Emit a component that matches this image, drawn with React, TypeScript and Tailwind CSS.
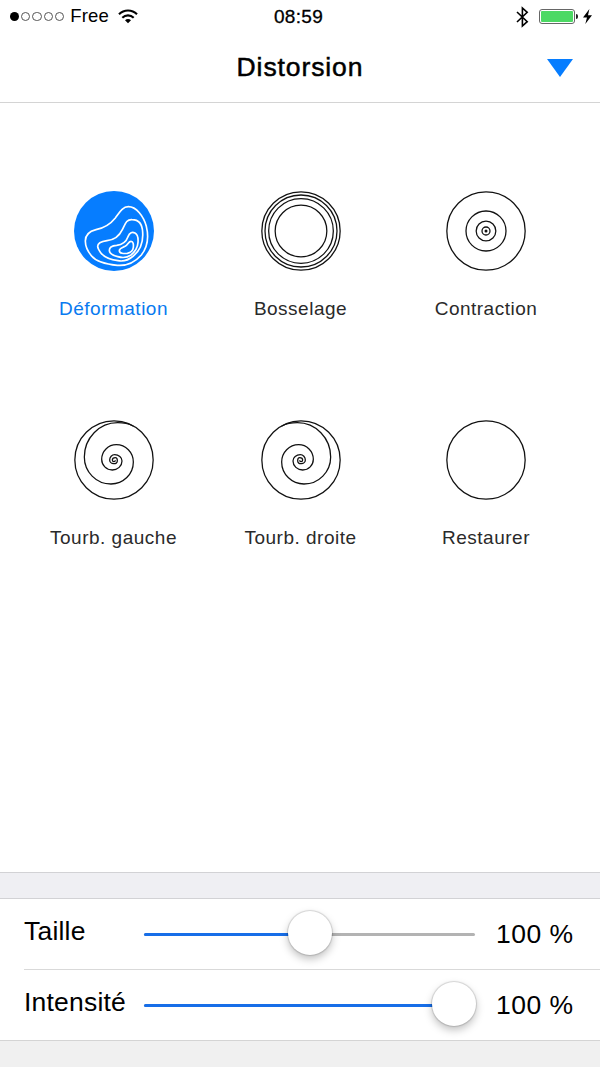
import type { ReactNode } from "react";
import clsx from "clsx";

const SPIRAL =
  "M178 18 C164 11 148 8 131 8 A100 103 0 0 0 31 111 A80 81 0 0 0 111 192 A67 66 0 0 0 178 126 A51 52 0 0 0 127 74 A44 44 0 0 0 83 118 A32 32 0 0 0 115 150 A29 27 0 0 0 144 123 A22 19 0 0 0 122 104 A15 16 0 0 0 107 120 A12 11 0 0 0 119 131 A11 9 0 0 0 130 122 A6 9 0 0 0 124 113 A9 7 0 0 0 115 120 A5 5 0 0 0 120 125 A4 4 0 0 0 124 121";

function Icon({ children }: { children?: ReactNode }) {
  return (
    <svg viewBox="0 0 240 240" className="size-20" fill="none" stroke="#111" strokeWidth="3.8">
      <circle cx="120" cy="120" r="117.5" />
      {children}
    </svg>
  );
}

function WarpIcon() {
  return (
    <svg viewBox="0 0 240 240" className="size-20" fill="none" stroke="#fff" strokeWidth="5" strokeLinejoin="round">
      <circle cx="120" cy="120" r="120" fill="#067dff" stroke="none" />
      <path d="M34 150 C34 130 46 121 66 116 C91 111 108 101 124 81 C136 65 145 47 163 47 C187 47 209 76 217 106 C225 139 220 169 202 192 C180 217 153 225 130 223 C99 220 67 212 52 194 C42 182 34 166 34 150 Z" />
      <path d="M71 166 C71 154 83 151 99 149 C120 147 136 135 145 116 C154 98 157 85 174 86 C195 86 205 99 206 124 C208 153 199 178 178 195 C164 207 148 212 132 209 C108 206 90 198 80 185 C74 177 71 172 71 166 Z" />
      <path d="M106 178 C106 168 114 164 128 163 C145 161 157 151 162 137 C167 124 175 122 183 126 C191 130 193 140 192 154 C191 170 184 181 171 192 C161 199 145 201 131 197 C115 193 106 186 106 178 Z" />
      <path d="M136 179 C136 171 145 170 153 166 C162 161 164 151 171 151 C178 151 179 161 178 169 C177 178 169 185 160 187 C150 188 136 188 136 179 Z" />
    </svg>
  );
}

const tools = [
  { label: "Déformation", active: true, icon: <WarpIcon /> },
  {
    label: "Bosselage",
    icon: (
      <Icon>
        <circle cx="120" cy="120" r="108" />
        <circle cx="120" cy="120" r="97" />
        <circle cx="120" cy="120" r="77.5" />
      </Icon>
    ),
  },
  {
    label: "Contraction",
    icon: (
      <Icon>
        <circle cx="120" cy="120" r="60" />
        <circle cx="120" cy="120" r="29.5" />
        <circle cx="120" cy="120" r="12" />
        <circle cx="120" cy="120" r="4.5" fill="#111" stroke="none" />
      </Icon>
    ),
  },
  {
    label: "Tourb. gauche",
    icon: (
      <Icon>
        <path d={SPIRAL} />
      </Icon>
    ),
  },
  {
    label: "Tourb. droite",
    icon: (
      <Icon>
        <path d={SPIRAL} transform="matrix(-1 0 0 1 240 0)" />
      </Icon>
    ),
  },
  { label: "Restaurer", icon: <Icon /> },
];

function StatusBar() {
  return (
    <div className="grid h-[33px] grid-cols-[1fr_auto_1fr] items-center pr-2 pl-[10px]">
      <div className="flex items-center">
        <div className="flex gap-[2px]">
          <span className="size-[9px] rounded-full bg-black" />
          {[1, 2, 3, 4].map((dot) => (
            <span key={dot} className="size-[9.3px] rounded-full border border-[#555]" />
          ))}
        </div>
        <span className="ml-[6px] text-[18.5px] leading-none tracking-[0.2px]">Free</span>
        <svg viewBox="0 0 20 15" className="ml-[9px] h-[15px] w-5" fill="none" stroke="#000" strokeWidth="2.1">
          <path d="M1 5.3 C6 .2 14 .2 19 5.3" />
          <path d="M4.3 8.8 C7.5 5.6 12.5 5.6 15.7 8.8" />
          <path d="M7 11.2 C8.7 9.6 11.3 9.6 13 11.2 L10 14.3 Z" fill="#000" stroke="none" />
        </svg>
      </div>
      <span className="mr-[5px] text-[19px] leading-none tracking-[0.3px] [-webkit-text-stroke:0.3px_black]">
        08:59
      </span>
      <div className="flex items-center justify-end">
        <svg viewBox="0 0 13 22" className="mr-[10px] h-[22px] w-[13px]" fill="none" stroke="#000" strokeWidth="1.6">
          <path d="M1 6 L11.2 15.7 L6.4 20 V2 L11.2 6.3 L1 16" />
        </svg>
        <span className="h-[15px] w-[36px] rounded-[3px] border border-[#666] p-px">
          <span className="block h-full rounded-[1px] bg-[#4cd964]" />
        </span>
        <span className="ml-px h-[5px] w-[2px] rounded-r-full bg-[#222]" />
        <svg viewBox="0 0 9 15" className="ml-[5px] h-[15px] w-[9px]">
          <path d="M6.4 0 L0 8.5 H4 L2.3 15 L9 6.2 H5 Z" fill="#000" />
        </svg>
      </div>
    </div>
  );
}

function SliderRow({ label, percent }: { label: string; percent: number }) {
  return (
    <div className="flex h-[70px] items-center">
      <span className="w-[120px] pb-[6px] text-[26.5px] leading-none tracking-[0.2px]">{label}</span>
      <div className="relative h-[3px] w-[331px] rounded-full bg-[#b3b3b3]">
        <div className="h-full rounded-full bg-[#176ee8]" style={{ width: `${percent}%` }} />
        <span
          className="absolute -top-[22px] size-[44px] rounded-full bg-white shadow-[0_0_1px_1px_rgba(0,0,0,0.14),0_4px_8px_rgba(0,0,0,0.25)]"
          style={{ left: `calc((100% - 43px) * ${percent / 100})` }}
        />
      </div>
      <span className="ml-[21px] text-[26.5px] leading-none tracking-[0.5px] whitespace-nowrap">100 %</span>
    </div>
  );
}

export default function App() {
  return (
    <div className="flex h-[1067px] w-[600px] flex-col overflow-hidden bg-[#f0f0f0] font-['Liberation_Sans',Arial,sans-serif] text-black">
      <header className="h-[103px] border-b border-[#d4d4d4] bg-white">
        <StatusBar />
        <div className="grid h-[69px] grid-cols-[1fr_auto_1fr] items-center pr-[27px] pl-[27px]">
          <h1 className="col-start-2 pb-px text-[26.5px] leading-none tracking-[0.9px] [-webkit-text-stroke:0.5px_black]">
            Distorsion
          </h1>
          <svg viewBox="0 0 26 18" className="h-[18px] w-[26px] justify-self-end">
            <path d="M0 0 H26 L13 18 Z" fill="#067dff" />
          </svg>
        </div>
      </header>

      <main className="grid flex-1 auto-rows-[229px] grid-cols-[187px_187px_184px] bg-white pt-[88px] pl-5">
        {tools.map((tool) => (
          <div key={tool.label} className="flex flex-col items-center">
            {tool.icon}
            <span
              className={clsx(
                "mt-[28px] text-[19px] leading-5 tracking-[0.5px]",
                tool.active ? "text-[#087af0]" : "text-[#2a2a2a]"
              )}
            >
              {tool.label}
            </span>
          </div>
        ))}
      </main>

      <div className="h-[27px] border-y border-[#d2d2d5] bg-[#efeff3]" />
      <section className="border-b border-[#d4d4d4] bg-white pl-6">
        <SliderRow label="Taille" percent={50} />
        <div className="border-t border-[#d9d9d9]">
          <SliderRow label="Intensité" percent={100} />
        </div>
      </section>
      <div className="h-[26px]" />
    </div>
  );
}
